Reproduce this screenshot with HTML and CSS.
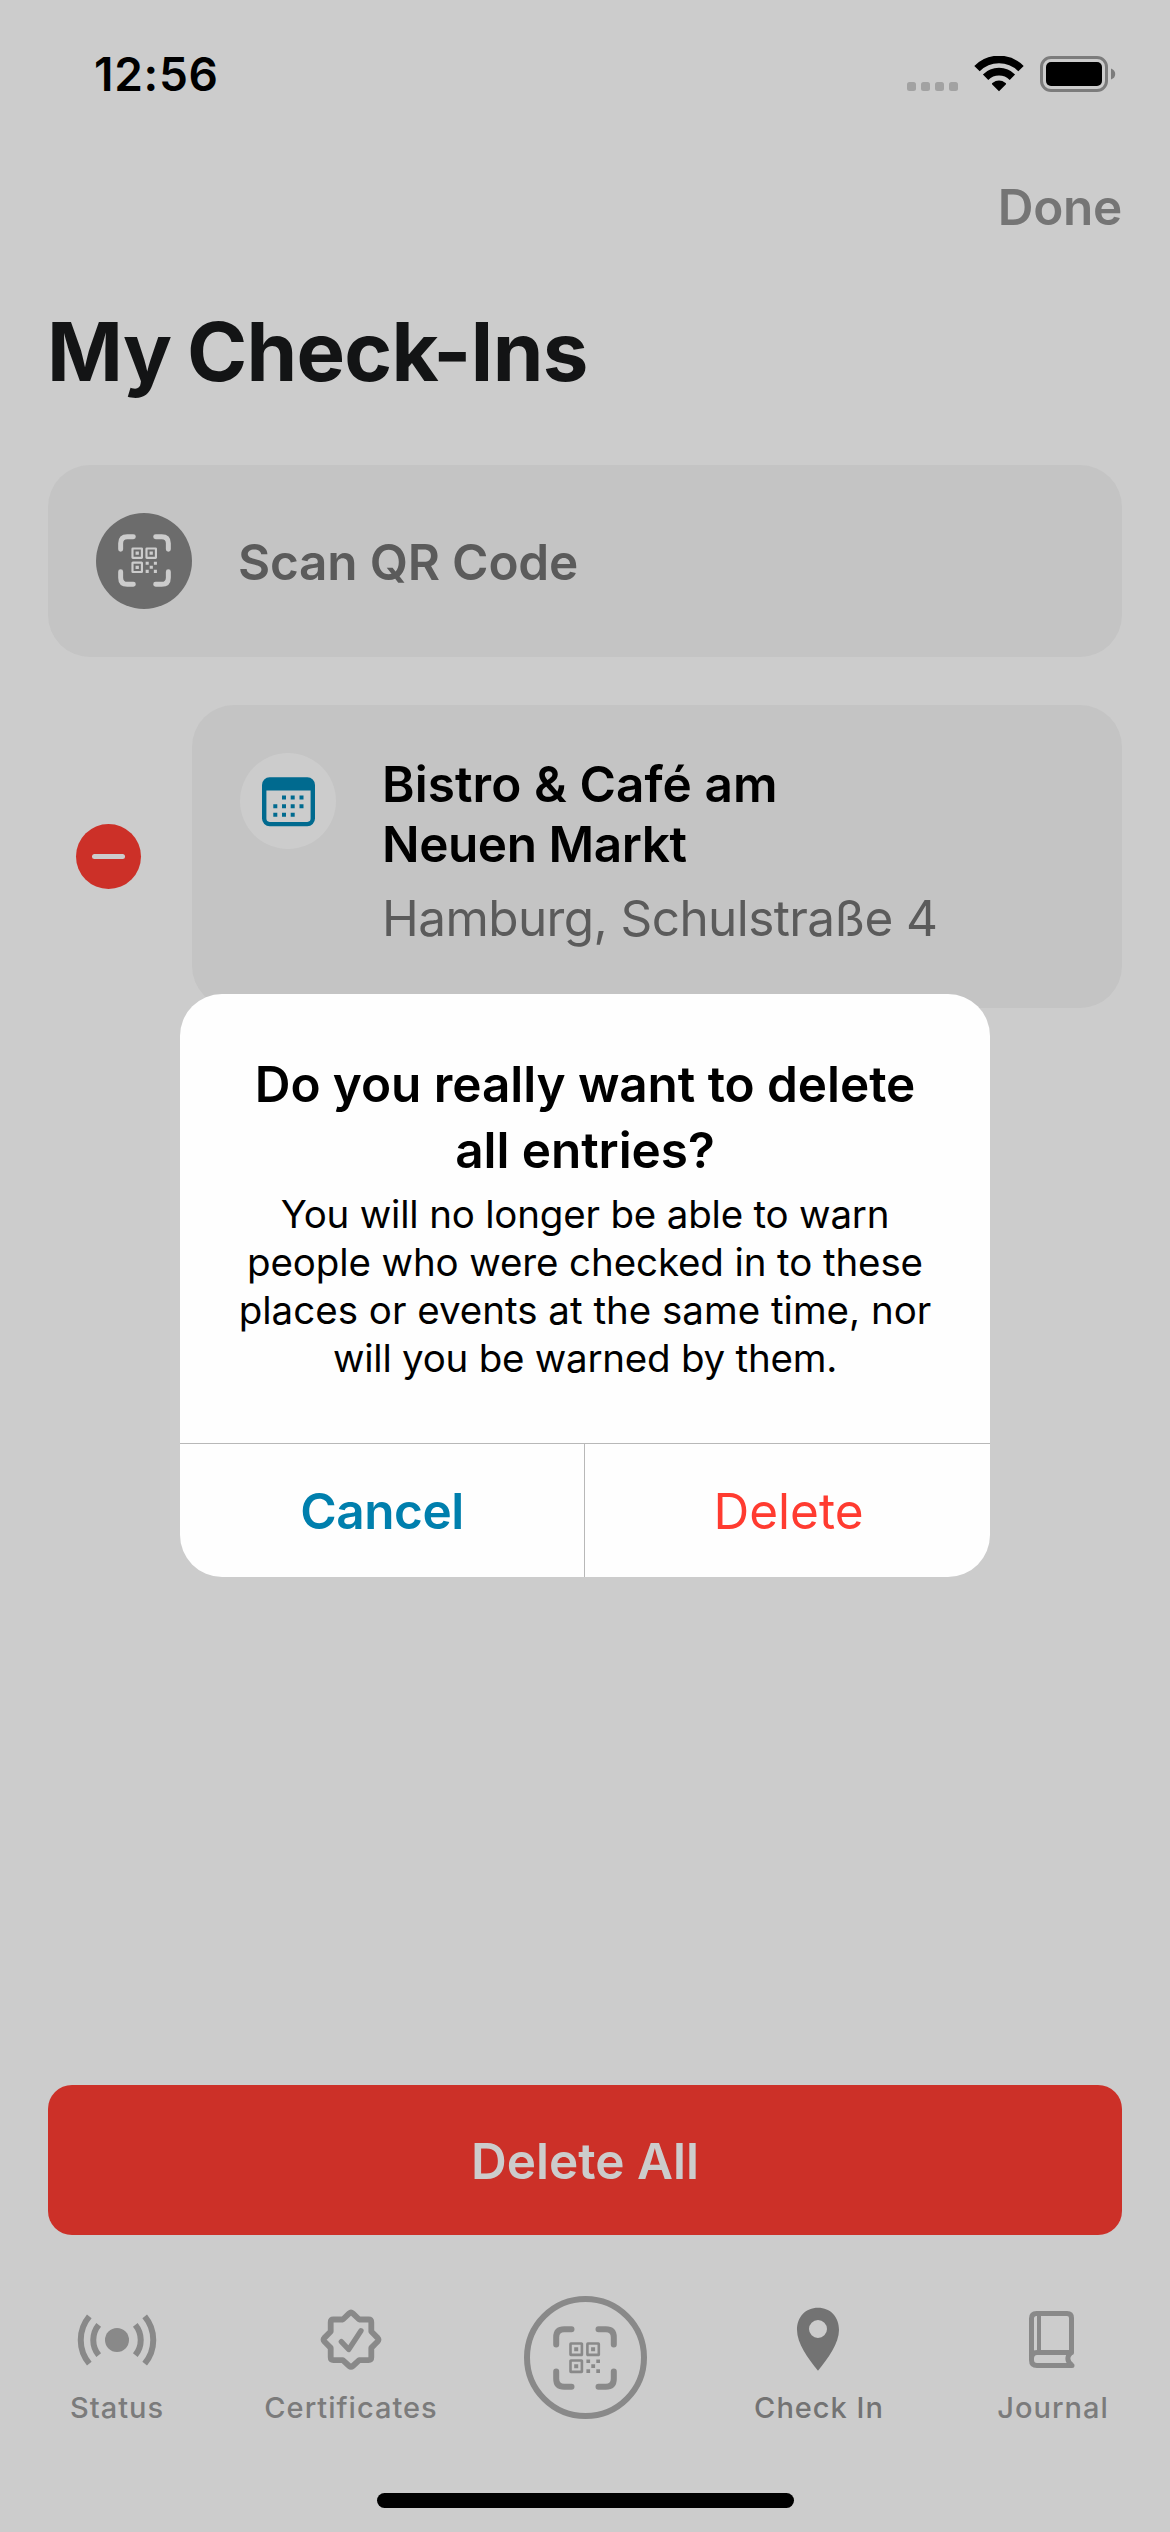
FILE: index.html
```html
<!DOCTYPE html>
<html lang="en">
<head>
<meta charset="utf-8">
<title>My Check-Ins</title>
<link rel="stylesheet" href="styles.css">
</head>
<body>
<svg class="defs" aria-hidden="true">
  <symbol id="qr-scan" viewBox="-32 -32 64 64">
    <g fill="none" stroke="currentColor" stroke-width="6" stroke-linecap="round">
      <path d="M-28.8-13.5V-20.8Q-28.8-28.8-20.8-28.8H-13.5"/>
      <path d="M28.8-13.5V-20.8Q28.8-28.8 20.8-28.8H13.5"/>
      <path d="M-28.8 13.5V20.8Q-28.8 28.8-20.8 28.8H-13.5"/>
      <path d="M28.8 13.5V20.8Q28.8 28.8 20.8 28.8H13.5"/>
    </g>
    <g fill="none" stroke="currentColor" stroke-width="2.6">
      <rect x="-14.5" y="-14.5" width="11.4" height="11.4" rx=".4"/>
      <rect x="2.4" y="-14.5" width="11.4" height="11.4" rx=".4"/>
      <rect x="-14.5" y="2.5" width="11.4" height="11.4" rx=".4"/>
    </g>
    <path fill="currentColor" d="M-10.8-10.8h4v4h-4zM6.1-10.8h4v4h-4zM-10.8 6.2h4v4h-4zM1.4 1.4h3.7v3.7h-3.7zM11.3 1.4h3.7v3.7h-3.7zM6.3 6.3h3.8v3.8h-3.8zM1.4 11.3h3.7v3.7h-3.7zM11.3 11.3h3.7v3.7h-3.7z"/>
  </symbol>
</svg>

<div class="screen">
  <header class="status-bar">
    <span class="time">12:56</span>
    <div class="indicators">
      <svg class="dots" width="51" height="36" viewBox="0 0 51 36"><g fill="#a2a2a2"><rect x="0" y="26" width="9" height="9" rx="2.5"/><rect x="14" y="26" width="9" height="9" rx="2.5"/><rect x="28" y="26" width="9" height="9" rx="2.5"/><rect x="42" y="26" width="9" height="9" rx="2.5"/></g></svg>
      <svg class="wifi" width="50" height="36" viewBox="0 0 50 36"><g fill="none" stroke="#000" stroke-width="7.6"><path d="M3 12.6A31 31 0 0 1 47 12.6"/><path d="M11.6 21.2A19 19 0 0 1 38.4 21.2"/></g><path d="M25 35.3L18 28.2Q17.700 27.400 18.400 27Q25 22.200 31.600 27Q32.300 27.400 32 28.200Z"/></svg>
      <svg class="battery" width="76" height="36" viewBox="0 0 76 36"><rect x="1.5" y="1.500" width="65" height="33" rx="9.500" fill="none" stroke="#7c7c7c" stroke-width="3"/><rect x="6" y="6" width="56" height="24" rx="5"/><path fill="#7c7c7c" d="M71 12.500Q75.200 14 75.200 18T71 23.500Z"/></svg>
    </div>
  </header>

  <nav class="nav"><span class="done">Done</span></nav>
  <h1 class="title">My Check-Ins</h1>

  <main class="content">
    <div class="card scan">
      <div class="disc disc-dark"><svg class="scan-icon"><use href="#qr-scan"/></svg></div>
      <span class="scan-label">Scan QR Code</span>
    </div>
    <div class="entry">
      <div class="remove"><span class="minus"></span></div>
      <div class="card event">
        <div class="disc disc-light">
          <svg width="53" height="50" viewBox="0 0 53 50"><rect x="2.200" y="2.500" width="48.600" height="44.600" rx="5.500" fill="none" stroke="#006a8f" stroke-width="4.400"/><path fill="#006a8f" d="M2 13.500V7Q2 2 7 2H46Q51 2 51 7V13.500Z"/><path fill="#006a8f" d="M20 18.500h4v4h-4zM28.700 18.500h4v4h-4zM37.500 18.500h4v4h-4zM11.300 27.200h4v4h-4zM20 27.200h4v4h-4zM28.700 27.200h4v4h-4zM37.500 27.200h4v4h-4zM11.300 35.800h4v4h-4zM20 35.800h4v4h-4zM28.700 35.800h4v4h-4z"/></svg>
        </div>
        <div class="event-text">
          <div class="place"><span class="place-a">Bistro &amp; Café am</span><br><span class="place-b">Neuen Markt</span></div>
          <div class="address">Hamburg, Schulstraße 4</div>
        </div>
      </div>
    </div>
  </main>

  <div class="delete-all">Delete All</div>

  <footer class="tabs">
    <div class="tab">
      <svg width="84" height="80" viewBox="-42 -40 84 80"><circle r="12" fill="#898989"/><g fill="none" stroke="#898989" stroke-width="6"><path d="M-27.700-23.600A36.800 36.800 0 0 0-27.700 23.600M27.700-23.600A36.800 36.800 0 0 1 27.700 23.600M-18.300-15.200A24 24 0 0 0-18.300 15.200M18.300-15.200A24 24 0 0 1 18.300 15.200"/></g></svg>
      <span>Status</span>
    </div>
    <div class="tab">
      <svg width="84" height="80" viewBox="-42 -40 84 80"><g fill="none" stroke="#898989" stroke-width="5.800" stroke-linejoin="round" stroke-linecap="round"><path d="M-17.500-20.500H-8.200L-1.800-26.600Q0-28.200 1.800-26.600L8.200-20.500H17.500Q20.300-20.500 20.300-17.700V-8.500L26.600-2.100Q28.200-.3 26.600 1.500L20.300 7.900V17.300Q20.300 20.100 17.500 20.100H8.200L1.800 26Q0 27.600-1.800 26L-8.200 20.100H-17.500Q-20.300 20.100-20.300 17.300V7.900L-26.600 1.500Q-28.200-.3-26.600-2.100L-20.300-8.500V-17.700Q-20.300-20.500-17.500-20.500Z"/><path stroke-width="5.300" d="M-9.700 1.600L-2.300 9.500L10-9.200"/></g></svg>
      <span>Certificates</span>
    </div>
    <div class="tab tab-scan">
      <div class="ring"><svg width="64" height="64"><use href="#qr-scan"/></svg></div>
    </div>
    <div class="tab tab-active">
      <svg width="84" height="80" viewBox="-42 -40 84 80"><path fill="#737373" fill-rule="evenodd" d="M-1-32.200C11.500-32.200 20-23 20-10C20 3 9 18.500-1 30.800C-11 18.500-22 3-22-10C-22-23-13.500-32.200-1-32.200ZM-1-20A9 9 0 1 0-1-2A9 9 0 1 0-1-20Z"/></svg>
      <span>Check In</span>
    </div>
    <div class="tab">
      <svg width="84" height="80" viewBox="-42 -40 84 80"><g fill="none" stroke="#898989" stroke-width="5"><path d="M18.500 12.500V-22Q18.500-26.500 14-26.500H-16.500Q-21.500-26.500-21.500-21.500V20Q-21.500 25.500-16 25.500H19" stroke-linecap="round"/><path d="M-21.500 18.500Q-21.500 12.400-16 12.400H18.500M18 12.500Q11.500 19 18.500 25" stroke-linejoin="round"/><path d="M-14-26V12" stroke-width="4"/></g></svg>
      <span>Journal</span>
    </div>
  </footer>
  <div class="home-indicator"></div>
</div>

<div class="alert" role="alertdialog">
  <div class="alert-body">
    <h2 class="alert-title">Do you really want to delete<br>all entries?</h2>
    <p class="alert-text"><span class="l1">You will no longer be able to warn</span><br><span class="l2">people who were checked in to these</span><br><span class="l3">places or events at the same time, nor</span><br><span class="l4">will you be warned by them.</span></p>
  </div>
  <div class="alert-actions">
    <div class="action cancel">Cancel</div>
    <div class="action delete">Delete</div>
  </div>
</div>
</body>
</html>
```
FILE: styles.css
```css
* { box-sizing: border-box; margin: 0; }
body {
  position: relative;
  width: 1170px;
  height: 2532px;
  overflow: hidden;
  background: #ccc;
  font-family: Inter, "Liberation Sans", sans-serif;
  color: #000;
}
svg { display: block; flex: none; }
.defs { position: absolute; width: 0; height: 0; }
.screen { display: flex; flex-direction: column; height: 2532px; }

.status-bar {
  display: flex;
  justify-content: space-between;
  align-items: center;
  height: 148px;
  padding: 0 54px 0 94px;
}
.time { font-size: 46px; font-weight: 600; letter-spacing: .7px; }
.indicators { display: flex; }
.wifi { margin-left: 16px; }
.battery { margin-left: 16px; }

.nav {
  display: flex;
  justify-content: flex-end;
  height: 118px;
  padding-right: 48px;
  font-size: 49.5px;
  font-weight: 600;
  line-height: 118px;
  letter-spacing: -.3px;
  color: #757575;
}
.title {
  padding-left: 47px;
  font-size: 81.5px;
  font-weight: 700;
  line-height: 172px;
  letter-spacing: -.75px;
  word-spacing: -3px;
  color: #131415;
}

.content {
  display: flex;
  flex-direction: column;
  gap: 48px;
  padding: 27px 48px 0;
}
.card { display: flex; background: #c4c4c4; border-radius: 42px; padding: 48px; }
.disc {
  display: flex;
  flex: none;
  align-items: center;
  justify-content: center;
  width: 96px;
  height: 96px;
  border-radius: 50%;
}
.disc-dark { background: #6c6c6c; color: #ccc; padding-bottom: 2px; }
.disc-light { background: #ccc; padding-top: 2px; }
.scan-icon { width: 53px; height: 53px; }
.scan { height: 192px; }
.scan-label {
  margin-left: 46px;
  font-size: 49.5px;
  font-weight: 600;
  line-height: 98px;
  letter-spacing: -.2px;
  color: #5b5b5b;
}
.entry { display: grid; grid-template-columns: 144px 1fr; align-items: center; }
.remove {
  display: flex;
  align-items: center;
  justify-content: center;
  width: 65px;
  height: 65px;
  margin-left: 28px;
  border-radius: 50%;
  background: #cc3028;
}
.minus { width: 33px; height: 5px; border-radius: 3px; background: #ccc; }
.event { height: 303px; }
.event-text { margin: 1px 0 0 46px; font-size: 49.5px; line-height: 60px; white-space: nowrap; }
.place { font-weight: 600; }
.place-a { letter-spacing: .08px; }
.place-b { letter-spacing: -.44px; }
.address { margin-top: 14px; letter-spacing: -.59px; color: #5b5b5b; }

.delete-all {
  margin: auto 48px 0;
  height: 150px;
  border-radius: 24px;
  background: #cc3028;
  color: #ccc;
  font-size: 49.5px;
  font-weight: 600;
  line-height: 152px;
  text-align: center;
}

.tabs {
  display: grid;
  grid-template-columns: repeat(5, 1fr);
  height: 197px;
  margin-top: 61px;
}
.tab {
  display: flex;
  flex-direction: column;
  align-items: center;
  gap: 10px;
  padding-top: 4px;
  font-size: 29px;
  font-weight: 500;
  line-height: 36px;
  letter-spacing: 1px;
  color: #7b7b7b;
}
.tab-active { color: #737373; }
.tab-scan { padding-top: 0; }
.ring {
  display: flex;
  align-items: center;
  justify-content: center;
  width: 123px;
  height: 123px;
  border: 6px solid #898989;
  border-radius: 50%;
  color: #898989;
}
.home-indicator {
  width: 417px;
  height: 15px;
  margin: 0 auto 24px;
  border-radius: 8px;
  background: #000;
}

.alert {
  position: absolute;
  left: 180px;
  top: 994px;
  display: flex;
  flex-direction: column;
  width: 810px;
  height: 583px;
  border-radius: 42px;
  background: #fefefe;
  overflow: hidden;
  text-align: center;
  white-space: nowrap;
}
.alert-body { flex: 1; padding-top: 57px; }
.alert-title { font-size: 49.5px; font-weight: 600; line-height: 66px; letter-spacing: -.07px; }
.alert-text { margin-top: 7px; font-size: 38.5px; line-height: 48px; }
.l1 { letter-spacing: -.19px; }
.l2 { letter-spacing: -.11px; }
.l4 { letter-spacing: -.24px; }
.alert-actions {
  display: grid;
  grid-template-columns: 1fr 1fr;
  height: 134px;
  border-top: 1px solid #b8b8b8;
  font-size: 49.5px;
  line-height: 135px;
}
.cancel { border-right: 1px solid #b8b8b8; font-weight: 600; letter-spacing: -.45px; color: #007fad; }
.delete { padding-left: 2px; color: #ff3b30; }
```
